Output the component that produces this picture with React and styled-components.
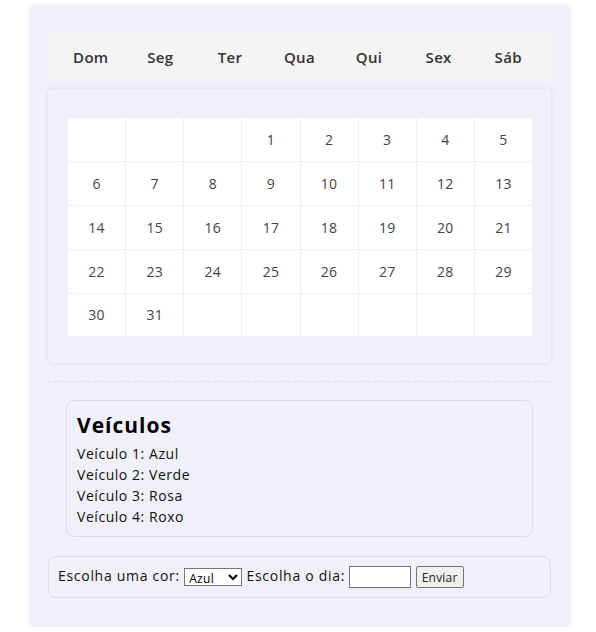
import React from "react";
import styled, { createGlobalStyle } from "styled-components";

const GlobalStyle = createGlobalStyle`
  body {
    margin: 0;
    background: #ffffff;
    font-family: "Open Sans", "DejaVu Sans", sans-serif;
    color: #222;
  }
`;

const Container = styled.div`
  width: 542px;
  margin: 5px 0 0 29px;
  padding: 28px 20px 29px 19px;
  box-sizing: border-box;
  background: #f0f0fa;
  border-radius: 6px;
  box-shadow: 0 0 6px rgba(0, 0, 0, 0.06);
  display: flex;
  flex-direction: column;
`;

const WeekHeader = styled.div`
  display: grid;
  grid-template-columns: repeat(7, 1fr);
  align-items: center;
  height: 48px;
  padding: 0 8px;
  background: #f4f4f4;
`;

const DayName = styled.div`
  text-align: center;
  font-size: 15px;
  font-weight: 600;
  letter-spacing: 0.3px;
  color: #333;
`;

const CalendarCard = styled.div`
  margin-top: 8px;
  padding: 28px 18px 26px 19px;
  background: #f0f0fa;
  border-radius: 5px;
  box-shadow: 0 0 4px rgba(0, 0, 0, 0.1);
`;

const DaysTable = styled.table`
  width: 100%;
  border-collapse: collapse;
  table-layout: fixed;
  background: #ffffff;

  td {
    height: 42.4px;
    padding: 0;
    border: 1px solid #eeeef8;
    text-align: center;
    font-size: 14px;
    letter-spacing: 0.3px;
    color: #444;
  }

  tr:nth-child(1) td,
  tr:nth-child(3) td {
    height: 43.4px;
  }
`;

const Divider = styled.hr`
  margin: 18px 0 18px;
  border: none;
  border-top: 1px dashed #dcdce6;
`;

const VehicleBox = styled.div`
  margin: 0 18px;
  padding: 8px 10px 9px;
  border: 1px solid #dddddd;
  border-radius: 8px;
`;

const VehicleTitle = styled.h2`
  margin: 0 0 2px;
  font-size: 21px;
  line-height: 32px;
  font-weight: 700;
  letter-spacing: 1px;
  color: #000;
`;

const VehicleLine = styled.div`
  font-size: 14px;
  line-height: 21px;
  letter-spacing: 0.55px;
  color: #111;
`;

const ChoiceForm = styled.form`
  margin-top: 19px;
  padding: 8px 9px 9px;
  border: 1px solid #dddddd;
  border-radius: 8px;
  font-size: 14px;
  line-height: 22px;
  letter-spacing: 0.7px;
  color: #111;
`;

const ColorSelect = styled.select`
  width: 58px;
  height: 18px;
  font-family: inherit;
  font-size: 12px;
  letter-spacing: 0.3px;
  padding: 0;
  border: 1px solid #767676;
  border-radius: 0;
  background: #fff;
  vertical-align: middle;
`;

const DayInput = styled.input`
  width: 62px;
  height: 22px;
  box-sizing: border-box;
  font-family: inherit;
  font-size: 12px;
  border: 1px solid #767676;
  padding: 1px 2px;
  vertical-align: middle;
`;

const SendButton = styled.button`
  height: 22px;
  padding: 0 5px;
  font-family: inherit;
  font-size: 12px;
  letter-spacing: 0.2px;
  color: #222;
  background: #efefef;
  border: 1px solid #767676;
  border-radius: 2px;
  vertical-align: middle;
`;

const dayNames = ["Dom", "Seg", "Ter", "Qua", "Qui", "Sex", "Sáb"];

const cells = [null, null, null, ...Array.from({ length: 31 }, (_, i) => i + 1)];
while (cells.length % 8 !== 0) cells.push(null);
const weeks = [];
for (let i = 0; i < cells.length; i += 8) weeks.push(cells.slice(i, i + 8));

const vehicles = [
  { id: 1, color: "Azul" },
  { id: 2, color: "Verde" },
  { id: 3, color: "Rosa" },
  { id: 4, color: "Roxo" },
];

export default function App() {
  return (
    <>
      <GlobalStyle />
      <Container>
        <WeekHeader>
          {dayNames.map((d) => (
            <DayName key={d}>{d}</DayName>
          ))}
        </WeekHeader>

        <CalendarCard>
          <DaysTable>
            <tbody>
              {weeks.map((week, wi) => (
                <tr key={wi}>
                  {week.map((day, di) => (
                    <td key={di}>{day ?? ""}</td>
                  ))}
                </tr>
              ))}
            </tbody>
          </DaysTable>
        </CalendarCard>

        <Divider />

        <VehicleBox>
          <VehicleTitle>Veículos</VehicleTitle>
          {vehicles.map((v) => (
            <VehicleLine key={v.id}>
              Veículo {v.id}: {v.color}
            </VehicleLine>
          ))}
        </VehicleBox>

        <ChoiceForm onSubmit={(e) => e.preventDefault()}>
          Escolha uma cor:{" "}
          <ColorSelect defaultValue="Azul">
            {vehicles.map((v) => (
              <option key={v.id}>{v.color}</option>
            ))}
          </ColorSelect>{" "}
          Escolha o dia: <DayInput type="text" />{" "}
          <SendButton type="submit">Enviar</SendButton>
        </ChoiceForm>
      </Container>
    </>
  );
}
